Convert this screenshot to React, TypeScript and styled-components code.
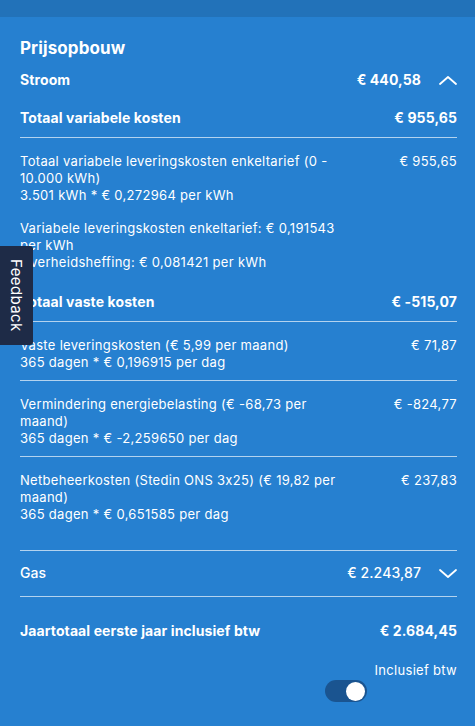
import styled, { createGlobalStyle } from "styled-components";

type Line = { id: string; label: string[]; amount: string };

const variableItems: Line[] = [
  {
    id: "var-1",
    label: [
      "Totaal variabele leveringskosten enkeltarief (0 - 10.000 kWh)",
      "3.501 kWh * € 0,272964 per kWh",
    ],
    amount: "€ 955,65",
  },
];

const fixedItems: Line[] = [
  {
    id: "fix-1",
    label: ["Vaste leveringskosten (€ 5,99 per maand)", "365 dagen * € 0,196915 per dag"],
    amount: "€ 71,87",
  },
  {
    id: "fix-2",
    label: [
      "Vermindering energiebelasting (€ -68,73 per maand)",
      "365 dagen * € -2,259650 per dag",
    ],
    amount: "€ -824,77",
  },
  {
    id: "fix-3",
    label: [
      "Netbeheerkosten (Stedin ONS 3x25) (€ 19,82 per maand)",
      "365 dagen * € 0,651585 per dag",
    ],
    amount: "€ 237,83",
  },
];

const Chevron = ({ up }: { up?: boolean }) => (
  <svg width="18" height="9" viewBox="0 0 18 9" fill="none">
    <path
      d={up ? "M1 8 L9 1 L17 8" : "M1 1 L9 8 L17 1"}
      stroke="#fff"
      strokeWidth="1.8"
      strokeLinecap="round"
      strokeLinejoin="round"
    />
  </svg>
);

export default function App() {
  return (
    <>
      <GlobalStyle />
      <TopBar />
      <Panel>
        <Title>Prijsopbouw</Title>

        <SectionHeader>
          <span>Stroom</span>
          <HeaderRight>
            <span>€ 440,58</span>
            <Chevron up />
          </HeaderRight>
        </SectionHeader>

        <Subtotal>
          <span>Totaal variabele kosten</span>
          <span>€ 955,65</span>
        </Subtotal>
        <Divider />
        {variableItems.map((item) => (
          <Item key={item.id}>
            <Label>
              {item.label.map((l) => (
                <div key={l}>{l}</div>
              ))}
            </Label>
            <Amount>{item.amount}</Amount>
          </Item>
        ))}
        <Note>
          <div>Variabele leveringskosten enkeltarief: € 0,191543 per kWh</div>
          <div>Overheidsheffing: € 0,081421 per kWh</div>
        </Note>

        <Subtotal $spaced>
          <span>Totaal vaste kosten</span>
          <span>€ -515,07</span>
        </Subtotal>
        {fixedItems.map((item, i) => (
          <div key={item.id}>
            <Divider />
            <Item $last={i === fixedItems.length - 1}>
              <Label>
                {item.label.map((l) => (
                  <div key={l}>{l}</div>
                ))}
              </Label>
              <Amount>{item.amount}</Amount>
            </Item>
          </div>
        ))}
        <Divider />

        <GasRow>
          <span>Gas</span>
          <HeaderRight>
            <span>€ 2.243,87</span>
            <Chevron />
          </HeaderRight>
        </GasRow>
        <Divider />

        <Total>
          <span>Jaartotaal eerste jaar inclusief btw</span>
          <span>€ 2.684,45</span>
        </Total>

        <VatToggle>
          <span>Inclusief btw</span>
          <Switch aria-checked="true" role="switch">
            <Knob />
          </Switch>
        </VatToggle>
      </Panel>

      <FeedbackTab>
        <span>Feedback</span>
      </FeedbackTab>
    </>
  );
}

const GlobalStyle = createGlobalStyle`
  html, body {
    margin: 0;
    background: #2680d0;
    font-family: Inter, "Noto Sans", sans-serif;
    color: #fff;
  }
`;

const TopBar = styled.div`
  height: 17px;
  background: #2272b9;
`;

const Panel = styled.div`
  padding: 21px 18px 0 20px;
`;

const Title = styled.h2`
  margin: 0;
  font-size: 17px;
  line-height: 20px;
  font-weight: 700;
  letter-spacing: 0.1px;
`;

const SectionHeader = styled.div`
  display: flex;
  justify-content: space-between;
  align-items: center;
  margin-top: 12px;
  font-size: 14px;
  line-height: 20px;
  font-weight: 700;
  letter-spacing: 0.1px;
`;

const HeaderRight = styled.div`
  display: flex;
  align-items: center;
  gap: 18px;
`;

const Subtotal = styled.div<{ $spaced?: boolean }>`
  display: flex;
  justify-content: space-between;
  margin-top: ${(p) => (p.$spaced ? "21px" : "18px")};
  padding-bottom: 9px;
  font-size: 14px;
  line-height: 20px;
  font-weight: 700;
  letter-spacing: 0.1px;
`;

const Divider = styled.hr`
  margin: 0;
  border: 0;
  height: 1px;
  background: rgba(255, 255, 255, 0.65);
`;

const Item = styled.div<{ $last?: boolean }>`
  display: grid;
  grid-template-columns: 336px 1fr;
  padding: 15px 0 ${(p) => (p.$last ? "27px" : "9px")};
  font-size: 13px;
  line-height: 17px;
  letter-spacing: 0.3px;
`;

const Label = styled.div``;

const Amount = styled.div`
  text-align: right;
`;

const Note = styled.div`
  width: 336px;
  margin-top: 7px;
  font-size: 13px;
  line-height: 17px;
  letter-spacing: 0.3px;
`;

const GasRow = styled(SectionHeader)`
  margin-top: 0;
  padding: 12px 0 13px;
  font-weight: 500;
`;

const Total = styled.div`
  display: flex;
  justify-content: space-between;
  padding-top: 24px;
  font-size: 14px;
  line-height: 20px;
  font-weight: 700;
  letter-spacing: 0.1px;
`;

const VatToggle = styled.div`
  display: flex;
  flex-direction: column;
  align-items: flex-end;
  margin-top: 21px;
  font-size: 13px;
  line-height: 16px;
  letter-spacing: 0.3px;

  span {
    margin-bottom: 2px;
  }
`;

const Switch = styled.div`
  display: flex;
  align-items: center;
  justify-content: flex-end;
  width: 42px;
  height: 22px;
  margin-right: 90px;
  padding: 0 2px;
  box-sizing: border-box;
  border-radius: 11px;
  background: #1a5490;
`;

const Knob = styled.div`
  width: 19px;
  height: 19px;
  border-radius: 50%;
  background: #fff;
`;

const FeedbackTab = styled.div`
  position: fixed;
  left: 0;
  top: 246px;
  width: 33px;
  height: 99px;
  display: flex;
  align-items: center;
  justify-content: center;
  background: #1e2b47;
  border-radius: 0 3px 3px 0;
  font-size: 15px;
  letter-spacing: 0.4px;

  span {
    writing-mode: vertical-rl;
  }
`;
